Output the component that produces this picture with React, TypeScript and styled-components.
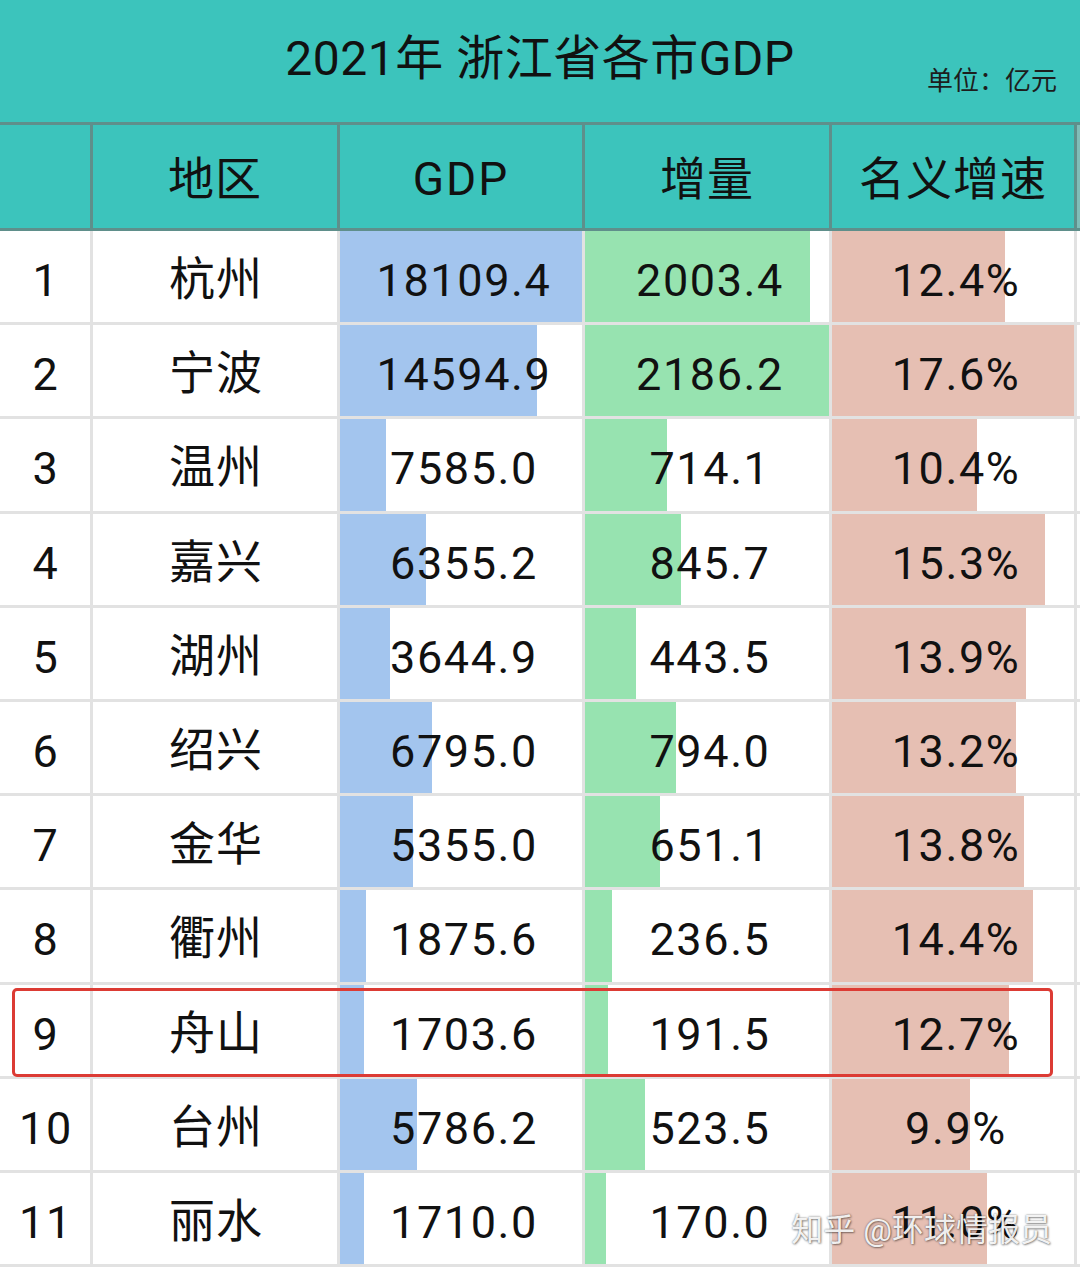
import React from "react";
import styled, { createGlobalStyle } from "styled-components";

const GlobalStyle = createGlobalStyle`
  html, body {
    margin: 0;
    padding: 0;
    background: #ffffff;
  }
  body {
    font-family: Roboto, "Noto Sans CJK SC", sans-serif;
    color: #111111;
  }
`;

const TEAL = "#3cc4bc";
const HEAD_LINE = "#5f8f8b";
const GRID_LINE = "#e2e2e2";
const COLS = "93px 247px 245px 247px 245px 3px";

const Page = styled.div`
  position: relative;
  width: 1080px;
  height: 1277px;
  background: #ffffff;
  overflow: hidden;
`;

const TitleBar = styled.header`
  display: grid;
  height: 122px;
  background: ${TEAL};
  align-items: center;
`;

const Title = styled.h1`
  grid-area: 1 / 1;
  justify-self: center;
  margin: 0 0 4px 0;
  font-size: 48px;
  font-weight: 400;
  line-height: 1.2;
  letter-spacing: 0.5px;
  color: #111;
  white-space: pre;
`;

const Unit = styled.div`
  grid-area: 1 / 1;
  justify-self: end;
  align-self: end;
  margin: 0 23px 25px 0;
  font-size: 26px;
  line-height: 1.2;
  color: #1d1d1d;
`;

const HeaderRow = styled.div`
  display: grid;
  grid-template-columns: ${COLS};
  height: 109px;
  box-sizing: border-box;
  border-top: 3px solid ${HEAD_LINE};
  border-bottom: 3px solid ${HEAD_LINE};
  background: ${TEAL};
`;

const HeadCell = styled.div<{ $latin?: boolean }>`
  display: flex;
  align-items: center;
  justify-content: center;
  padding-top: 6px;
  box-sizing: border-box;
  border-right: 3px solid ${HEAD_LINE};
  font-size: 46px;
  line-height: 1.2;
  letter-spacing: ${(p) => (p.$latin ? "2px" : "1px")};
  color: #111;
`;

const HeadFill = styled.div`
  background: #7fbdb8;
`;

const Body = styled.div`
  display: grid;
  grid-auto-rows: 94.2px;
`;

const Row = styled.div`
  position: relative;
  display: grid;
  grid-template-columns: ${COLS};
`;

const Cell = styled.div<{ $bar?: string; $fill?: number }>`
  display: flex;
  align-items: center;
  justify-content: center;
  padding-top: 9px;
  padding-left: ${(p) => (p.$bar ? "6px" : "2px")};
  box-sizing: border-box;
  border-right: 3px solid ${GRID_LINE};
  border-bottom: 3px solid ${GRID_LINE};
  background: ${(p) =>
    p.$bar
      ? `linear-gradient(to right, ${p.$bar} ${p.$fill}px, #ffffff ${p.$fill}px)`
      : "#ffffff"};
  font-size: 45px;
  line-height: 1.2;
  letter-spacing: 1.6px;
  color: #111;
`;

const NameCell = styled(Cell)`
  padding-top: 6px;
  font-size: 46px;
  letter-spacing: 1px;
`;

const EdgeCell = styled.div`
  border-bottom: 3px solid ${GRID_LINE};
  box-sizing: border-box;
`;

const Highlight = styled.div`
  position: absolute;
  left: 12px;
  top: 3px;
  width: 1041px;
  height: 89px;
  box-sizing: border-box;
  border: 3px solid #dc3b34;
  border-radius: 5px;
  pointer-events: none;
`;

const Watermark = styled.div`
  position: absolute;
  right: 28px;
  bottom: 25px;
  font-size: 32px;
  line-height: 1.3;
  color: rgba(255, 255, 255, 0.92);
  text-shadow: 0 0 2px rgba(0, 0, 0, 0.55), 1px 1px 2px rgba(0, 0, 0, 0.35);
  white-space: pre;
`;

const BLUE = "#a3c5ee";
const GREEN = "#97e3b0";
const SALMON = "#e6bfb3";

type Item = {
  rank: number;
  name: string;
  gdp: string;
  gdpW: number;
  inc: string;
  incW: number;
  rate: string;
  rateW: number;
};

const rows: Item[] = [
  { rank: 1, name: "杭州", gdp: "18109.4", gdpW: 243, inc: "2003.4", incW: 225, rate: "12.4%", rateW: 173 },
  { rank: 2, name: "宁波", gdp: "14594.9", gdpW: 197, inc: "2186.2", incW: 247, rate: "17.6%", rateW: 245 },
  { rank: 3, name: "温州", gdp: "7585.0", gdpW: 46, inc: "714.1", incW: 82, rate: "10.4%", rateW: 145 },
  { rank: 4, name: "嘉兴", gdp: "6355.2", gdpW: 86, inc: "845.7", incW: 96, rate: "15.3%", rateW: 213 },
  { rank: 5, name: "湖州", gdp: "3644.9", gdpW: 50, inc: "443.5", incW: 51, rate: "13.9%", rateW: 194 },
  { rank: 6, name: "绍兴", gdp: "6795.0", gdpW: 92, inc: "794.0", incW: 91, rate: "13.2%", rateW: 184 },
  { rank: 7, name: "金华", gdp: "5355.0", gdpW: 73, inc: "651.1", incW: 75, rate: "13.8%", rateW: 192 },
  { rank: 8, name: "衢州", gdp: "1875.6", gdpW: 26, inc: "236.5", incW: 27, rate: "14.4%", rateW: 201 },
  { rank: 9, name: "舟山", gdp: "1703.6", gdpW: 24, inc: "191.5", incW: 23, rate: "12.7%", rateW: 177 },
  { rank: 10, name: "台州", gdp: "5786.2", gdpW: 77, inc: "523.5", incW: 60, rate: "9.9%", rateW: 138 },
  { rank: 11, name: "丽水", gdp: "1710.0", gdpW: 24, inc: "170.0", incW: 21, rate: "11.0%", rateW: 155 },
];

export default function App() {
  return (
    <Page>
      <GlobalStyle />
      <TitleBar>
        <Title>2021年 浙江省各市GDP</Title>
        <Unit>单位：亿元</Unit>
      </TitleBar>
      <HeaderRow>
        <HeadCell />
        <HeadCell>地区</HeadCell>
        <HeadCell $latin>GDP</HeadCell>
        <HeadCell>增量</HeadCell>
        <HeadCell>名义增速</HeadCell>
        <HeadFill />
      </HeaderRow>
      <Body>
        {rows.map((r) => (
          <Row key={r.rank}>
            <Cell>{r.rank}</Cell>
            <NameCell>{r.name}</NameCell>
            <Cell $bar={BLUE} $fill={r.gdpW}>{r.gdp}</Cell>
            <Cell $bar={GREEN} $fill={r.incW}>{r.inc}</Cell>
            <Cell $bar={SALMON} $fill={r.rateW}>{r.rate}</Cell>
            <EdgeCell />
            {r.rank === 9 && <Highlight />}
          </Row>
        ))}
      </Body>
      <Watermark>知乎 @环球情报员</Watermark>
    </Page>
  );
}
